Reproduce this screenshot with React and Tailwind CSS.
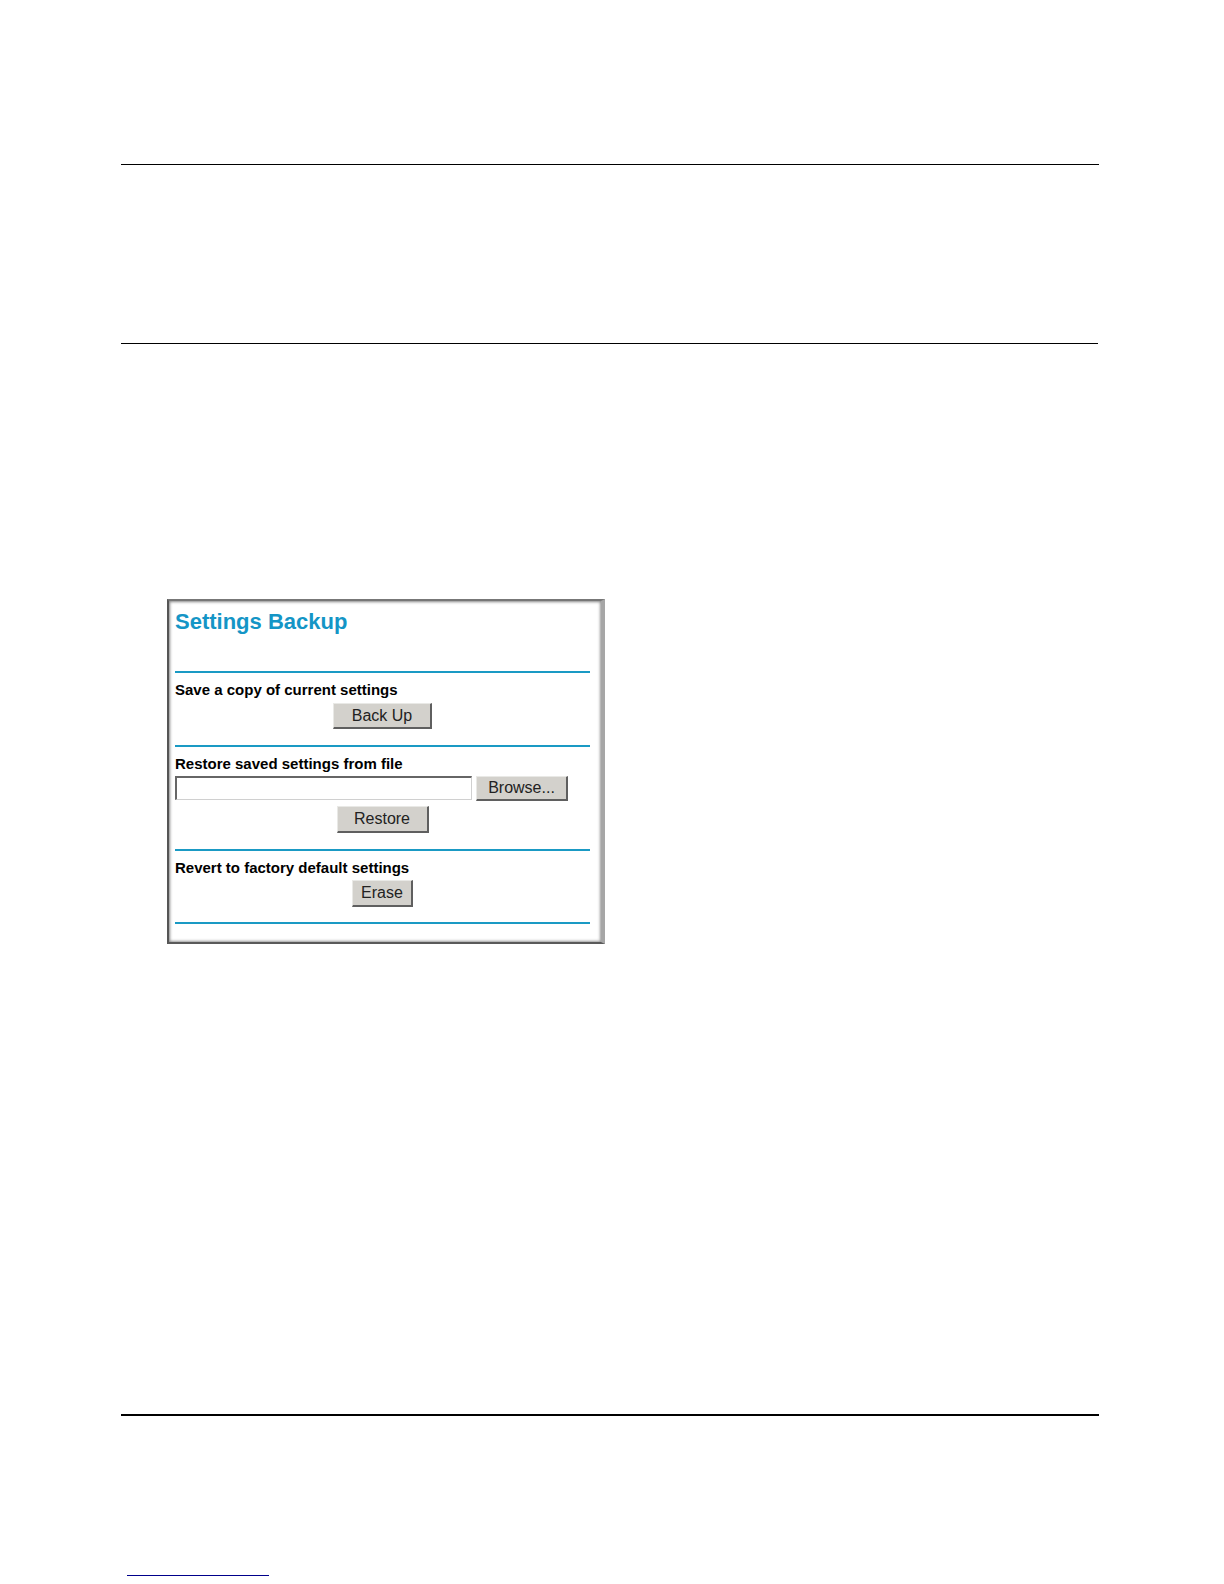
const bevel =
  "border-t border-l border-r-2 border-b-2 border-t-[#e9e9e6] border-l-[#e9e9e6] border-r-[#5f5f5f] border-b-[#5f5f5f] bg-[#d3d1cc] text-[#222222] text-base leading-none";

function Rule() {
  return <hr className="border-0 h-[2px] bg-[#1a9ac4]" />;
}

export default function App() {
  return (
    <div className="min-h-screen bg-white pl-[121px] pr-[125px] pt-[164px] pb-2 font-['Liberation_Sans',Arial,sans-serif]">
      <hr className="border-0 h-px bg-black" />
      <hr className="border-0 h-px bg-black mt-[178px] mr-px" />

      <main className="mt-[255px] ml-[46px] max-w-[438px] min-h-[345px] bg-white border-l-2 border-t-2 border-b-2 border-r-4 border-l-[#555555] border-t-[#777777] border-b-[#5a5a5a] border-r-[#a6a6a6] shadow-[inset_1px_1px_3px_#8a8a8a,inset_-1px_-1px_3px_#a0a0a0] pl-[6px] pr-[11px] pt-[7px]">
        <h1 className="h-[63px] text-[22px] leading-7 font-bold text-[#1495c6]">Settings Backup</h1>

        <Rule />
        <section className="h-[72px] pt-[7px]">
          <h2 className="text-[15px] leading-5 font-bold text-black">Save a copy of current settings</h2>
          <div className="flex justify-center pt-[3px]">
            <button type="button" className={`${bevel} h-[26px] w-[99px]`}>Back Up</button>
          </div>
        </section>

        <Rule />
        <section className="h-[102px] pt-[7px]">
          <h2 className="text-[15px] leading-5 font-bold text-black">
            <label htmlFor="settings-file">Restore saved settings from file</label>
          </h2>
          <div className="flex gap-1 pt-[2px]">
            <input
              id="settings-file"
              type="text"
              className="h-[24px] w-[297px] min-w-0 bg-white px-1 text-[15px] border-t-2 border-l-2 border-r border-b border-t-[#666666] border-l-[#666666] border-r-[#d0d0d0] border-b-[#d0d0d0]"
            />
            <button type="button" className={`${bevel} h-[25px] w-[92px]`}>Browse...</button>
          </div>
          <div className="flex justify-center pt-[5px]">
            <button type="button" className={`${bevel} h-[27px] w-[92px]`}>Restore</button>
          </div>
        </section>

        <Rule />
        <section className="h-[71px] pt-[7px]">
          <h2 className="text-[15px] leading-5 font-bold text-black">Revert to factory default settings</h2>
          <div className="flex justify-center pt-[2px]">
            <button type="button" className={`${bevel} h-[27px] w-[61px]`}>Erase</button>
          </div>
        </section>
        <Rule />
      </main>

      <footer className="pt-[470px]">
        <hr className="border-0 h-[2px] bg-black" />
        <hr className="border-0 h-px w-[142px] bg-[#00008b] mt-[159px] ml-[6px]" />
      </footer>
    </div>
  );
}
